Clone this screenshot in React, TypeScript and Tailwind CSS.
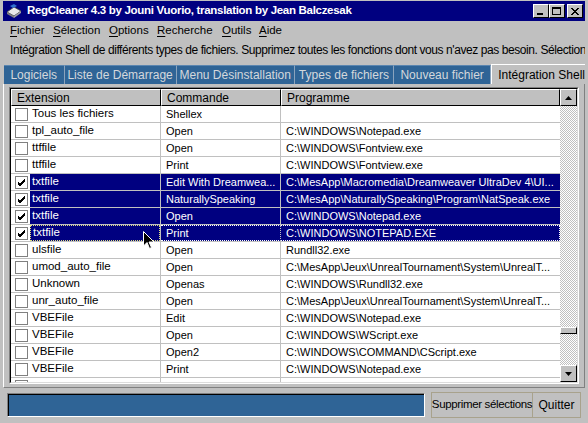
import React from 'react'

type Row = { ext: string; cmd: string; prog: string; checked?: boolean; focus?: boolean }

const rows: Row[] = [
  { ext: 'Tous les fichiers', cmd: 'Shellex', prog: '' },
  { ext: 'tpl_auto_file', cmd: 'Open', prog: 'C:\\WINDOWS\\Notepad.exe' },
  { ext: 'ttffile', cmd: 'Open', prog: 'C:\\WINDOWS\\Fontview.exe' },
  { ext: 'ttffile', cmd: 'Print', prog: 'C:\\WINDOWS\\Fontview.exe' },
  { ext: 'txtfile', cmd: 'Edit With Dreamwea...', prog: 'C:\\MesApp\\Macromedia\\Dreamweaver UltraDev 4\\UI...', checked: true },
  { ext: 'txtfile', cmd: 'NaturallySpeaking', prog: 'C:\\MesApp\\NaturallySpeaking\\Program\\NatSpeak.exe', checked: true },
  { ext: 'txtfile', cmd: 'Open', prog: 'C:\\WINDOWS\\Notepad.exe', checked: true },
  { ext: 'txtfile', cmd: 'Print', prog: 'C:\\WINDOWS\\NOTEPAD.EXE', checked: true, focus: true },
  { ext: 'ulsfile', cmd: 'Open', prog: 'Rundll32.exe' },
  { ext: 'umod_auto_file', cmd: 'Open', prog: 'C:\\MesApp\\Jeux\\UnrealTournament\\System\\UnrealT...' },
  { ext: 'Unknown', cmd: 'Openas', prog: 'C:\\WINDOWS\\Rundll32.exe' },
  { ext: 'unr_auto_file', cmd: 'Open', prog: 'C:\\MesApp\\Jeux\\UnrealTournament\\System\\UnrealT...' },
  { ext: 'VBEFile', cmd: 'Edit', prog: 'C:\\WINDOWS\\Notepad.exe' },
  { ext: 'VBEFile', cmd: 'Open', prog: 'C:\\WINDOWS\\WScript.exe' },
  { ext: 'VBEFile', cmd: 'Open2', prog: 'C:\\WINDOWS\\COMMAND\\CScript.exe' },
  { ext: 'VBEFile', cmd: 'Print', prog: 'C:\\WINDOWS\\Notepad.exe' },
  // next row is scrolled almost out of view, only its top edge shows
  { ext: '', cmd: '', prog: '' },
]

const tabs = ['Logiciels', 'Liste de Démarrage', 'Menu Désinstallation', 'Types de fichiers', 'Nouveau fichier']
const tabWidths = ['w-[61px]', 'w-[113px]', 'w-[119px]', 'w-[100px]', 'w-[98px]']

// first letter underlined, fixed slot widths to match the original menu spacing
const menus: [string, string, string][] = [
  ['F', 'ichier', 'w-[43px]'],
  ['S', 'élection', 'w-[56px]'],
  ['O', 'ptions', 'w-[48px]'],
  ['R', 'echerche', 'w-[65px]'],
  ['O', 'utils', 'w-[37px]'],
  ['A', 'ide', 'w-[30px]'],
]

function Check({ on }: { on?: boolean }) {
  return (
    <div className="w-[13px] h-[13px] shrink-0 bg-white border border-[#808080] flex items-center justify-center">
      {on && (
        <svg width="9" height="9" viewBox="0 0 9 9">
          <path d="M1 4 L3 6 L8 1 M1 5 L3 7 L8 2 M1 6 L3 8 L8 3" stroke="#000" strokeWidth="1" fill="none" />
        </svg>
      )}
    </div>
  )
}

function TitleButton({ kind }: { kind: 'min' | 'max' | 'close' }) {
  return (
    <div className="w-[16px] h-[14px] bg-[#c0c0c0] border-t border-l border-white border-r border-b border-r-black border-b-black flex items-center justify-center">
      <svg width="10" height="9" viewBox="0 0 10 9">
        {kind === 'min' && <rect x="1" y="6" width="6" height="2" fill="#000" />}
        {kind === 'max' && (
          <>
            <rect x="0.5" y="0.5" width="8" height="7" fill="none" stroke="#000" />
            <rect x="0" y="0" width="9" height="2" fill="#000" />
          </>
        )}
        {kind === 'close' && <path d="M1 1 L8 8 M2 1 L9 8 M8 1 L1 8 M9 1 L2 8" stroke="#000" strokeWidth="1" />}
      </svg>
    </div>
  )
}

function ScrollArrow({ up }: { up?: boolean }) {
  return (
    <div className="w-[17px] h-[17px] bg-[#c0c0c0] border-t border-l border-white border-r border-b border-r-black border-b-black flex items-center justify-center">
      <svg width="7" height="4" viewBox="0 0 7 4">
        <path d={up ? 'M3.5 0 L7 4 L0 4 Z' : 'M0 0 L7 0 L3.5 4 Z'} fill="#000" />
      </svg>
    </div>
  )
}

export default function App() {
  return (
    <div
      className="relative w-[588px] h-[423px] overflow-hidden bg-[#c0c0c0] text-[11px] text-black flex flex-col border-l-[3px] border-r-[3px] border-[#c0c0c0]"
      style={{ fontFamily: '"Liberation Sans", Arial, sans-serif' }}
    >
      {/* Title bar */}
      <div className="mt-[1px] h-[20px] bg-[#000080] flex items-center pl-[2px] pr-[2px]">
        <svg width="18" height="16" viewBox="0 0 18 16" className="mr-[4px]">
          <path d="M2 9 L9 4 L16 8 L9 13 Z" fill="#e8e8e8" stroke="#404040" strokeWidth="0.8" />
          <path d="M2 9 L2 11 L9 15 L9 13 Z" fill="#808080" />
          <path d="M9 13 L9 15 L16 10 L16 8 Z" fill="#a0a0a0" />
          <path d="M5 3 L9 1 L12 3 L8 5 Z" fill="#3070d0" />
        </svg>
        <span className="text-white font-bold text-[11.5px] tracking-[-0.3px] flex-1 whitespace-nowrap">
          RegCleaner 4.3 by Jouni Vuorio, translation by Jean Balczesak
        </span>
        <div className="flex items-center">
          <TitleButton kind="min" />
          <TitleButton kind="max" />
          <div className="w-[2px]" />
          <TitleButton kind="close" />
        </div>
      </div>

      {/* Menu bar */}
      <div className="h-[19px] flex items-center pl-[7px] text-[11.5px]">
        {menus.map(([k, r, w], i) => (
          <span key={i} className={`${w} whitespace-nowrap`}>
            <span className="underline underline-offset-2">{k}</span>
            {r}
          </span>
        ))}
      </div>

      {/* Description */}
      <div className="h-[20px] pl-[7px] flex items-center whitespace-nowrap text-[12px] tracking-[-0.42px]">
        Intégration Shell de différents types de fichiers. Supprimez toutes les fonctions dont vous n'avez pas besoin. Sélection 1 sur 200
      </div>

      {/* Tabs */}
      <div className="mt-[4px] h-[20px] flex items-end pl-[1px]">
        {tabs.map((t, i) => (
          <div
            key={t}
            className={`${tabWidths[i]} h-[19px] bg-[#2f6496] text-[#d4d8dc] text-[12px] flex items-center justify-center border-r border-[#8aa3bd] border-t border-t-[#5b86b0] whitespace-nowrap`}
          >
            {t}
          </div>
        ))}
        <div className="flex-1 h-[20px] bg-[#c0c0c0] border-t border-l border-white flex items-center justify-center text-[12px] whitespace-nowrap pl-[6px]">
          Intégration Shell
        </div>
      </div>

      {/* Panel */}
      <div className="h-[304px] border-l border-white border-b border-r border-b-[#808080] border-r-[#808080] px-[5px] pt-[3px]">
        <div className="h-[297px] border-t border-l border-[#808080] border-b border-r border-b-white border-r-white">
          <div className="h-full border-t border-l border-black border-b border-r border-b-[#dcdcdc] border-r-[#dcdcdc] flex bg-white">
            <div className="w-[549px] flex flex-col overflow-hidden">
              {/* Header */}
              <div className="h-[17px] flex shrink-0 bg-[#c0c0c0]">
                {[
                  ['Extension', 'w-[150px]'],
                  ['Commande', 'w-[120px]'],
                  ['Programme', 'flex-1'],
                ].map(([h, w]) => (
                  <div
                    key={h}
                    className={`${w} h-[17px] border-t border-l border-white border-r border-b border-r-black border-b-black flex items-center pl-[5px] text-[12px]`}
                  >
                    {h}
                  </div>
                ))}
              </div>
              {/* Rows */}
              {rows.map((r, i) => (
                <div key={i} className="h-[17px] shrink-0 flex border-b border-[#c0c0c0]">
                  <div className="w-[150px] flex items-center pl-[4px] border-r border-[#c0c0c0]">
                    <Check on={r.checked} />
                    <div
                      className={`flex-1 h-full flex items-center pl-[2px] ml-[2px] whitespace-nowrap text-[11.5px] ${
                        r.checked ? 'bg-[#000080] text-white' : ''
                      } ${r.focus ? 'border border-dotted border-[#e0e080]' : ''}`}
                    >
                      {r.ext}
                    </div>
                  </div>
                  <div
                    className={`w-[120px] flex items-center pl-[5px] border-r border-[#c0c0c0] ${
                      r.checked ? 'bg-[#000080] text-white' : ''
                    } ${r.focus ? 'border-t border-b border-dotted border-t-white border-b-white' : ''}`}
                  >
                    <span className="whitespace-nowrap">{r.cmd}</span>
                  </div>
                  <div
                    className={`flex-1 flex items-center pl-[5px] whitespace-nowrap overflow-hidden ${
                      r.checked ? 'bg-[#000080] text-white' : ''
                    } ${r.focus ? 'border-t border-b border-r border-dotted border-white' : ''}`}
                  >
                    {r.prog}
                  </div>
                </div>
              ))}
            </div>
            {/* Scrollbar */}
            <div className="w-[17px] flex flex-col bg-[repeating-conic-gradient(#c0c0c0_0_25%,#ffffff_0_50%)] bg-[length:2px_2px]">
              <ScrollArrow up />
              <div className="flex-1 flex flex-col">
                <div className="h-[221px]" />
                <div className="h-[7px] bg-[#c0c0c0] border-t border-l border-white border-r border-b border-r-black border-b-black" />
              </div>
              <ScrollArrow />
            </div>
          </div>
        </div>
      </div>

      {/* Bottom bar */}
      <div className="flex items-center mt-[4px] pl-[4px] gap-[6px] text-[12px]">
        <div className="w-[418px] h-[24px] border-t border-l border-[#808080] border-b border-r border-b-white border-r-white">
          <div className="h-full border-t border-l border-black bg-[#2f6496]" />
        </div>
        <div className="flex h-[26px] border border-[#a8a28c]">
          <div className="w-[101px] flex items-center justify-center border-r border-[#a8a28c] whitespace-nowrap text-[11.5px] tracking-[-0.35px]">
            Supprimer sélections
          </div>
          <div className="w-[47px] flex items-center justify-center whitespace-nowrap">Quitter</div>
        </div>
      </div>

      {/* Mouse cursor */}
      <svg className="absolute left-[140px] top-[231px]" width="12" height="19" viewBox="0 0 12 19">
        <path d="M0.5 0.5 L0.5 15 L4 11.5 L6.5 17.5 L8.5 16.5 L6 11 L11 11 Z" fill="#000" stroke="#fff" strokeWidth="1" />
      </svg>
    </div>
  )
}
